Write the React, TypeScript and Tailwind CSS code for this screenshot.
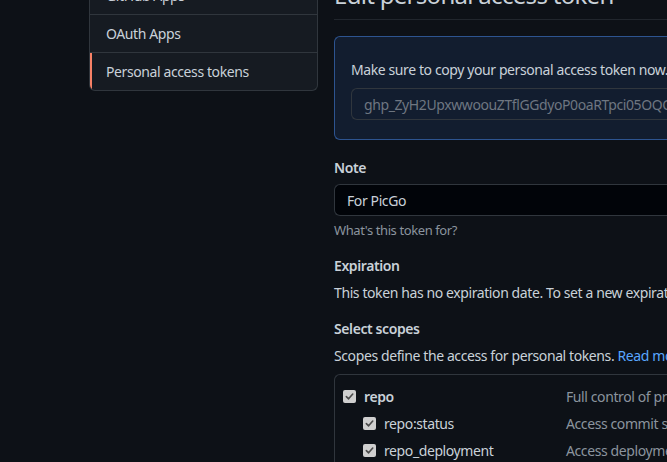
import React from "react";

function Check() {
  return (
    <span className="flex h-[13px] w-[13px] shrink-0 items-center justify-center rounded-[2px] bg-[#cfcfcf]">
      <svg width="9" height="9" viewBox="0 0 10 10" fill="none">
        <path d="M1.5 5.2 L4 7.6 L8.6 2.3" stroke="#4a4a4a" strokeWidth="1.8" strokeLinecap="round" strokeLinejoin="round" />
      </svg>
    </span>
  );
}

export default function App() {
  const font = { fontFamily: '"Noto Sans", "Liberation Sans", sans-serif', letterSpacing: "-0.4px" };
  return (
    <div className="h-[462px] w-[667px] overflow-hidden bg-[#0d1117] text-[14px] text-[#c9d1d9]" style={font}>
      <div className="flex gap-[16px] pl-[89px]">
        {/* Sidebar */}
        <div className="-mt-[23px] w-[229px] shrink-0">
          <div className="overflow-hidden rounded-b-[6px] border border-t-0 border-[#30363d] bg-[#161b22]">
            <div className="flex h-[38px] items-center border-b border-[#30363d] pl-[16px] leading-[21px]">GitHub Apps</div>
            <div className="flex h-[38px] items-center border-b border-[#30363d] pl-[16px] leading-[21px]">OAuth Apps</div>
            <div className="flex h-[37px] items-stretch">
              <span className="w-[2px] bg-[#f78166]" />
              <span className="flex items-center pl-[14px] leading-[21px]">Personal access tokens</span>
            </div>
          </div>
        </div>

        {/* Main */}
        <div className="-mt-[27px] min-w-0 flex-1">
          <div className="whitespace-nowrap border-b border-[#21262d] pb-[6px] pt-[4px] text-[24px] leading-[36px] tracking-[-0.7px]">
            Edit personal access token
          </div>

          <div className="mt-[16px] w-[420px] rounded-l-[6px] border border-r-0 border-[#2d5490] bg-[#121d2f] pb-[19px] pl-[16px] pt-[22px]">
            <div className="whitespace-nowrap leading-[21px]">Make sure to copy your personal access token now. You won't be able to see it again!</div>
            <div className="mt-[8px] flex h-[32px] items-center whitespace-nowrap rounded-l-[6px] border border-r-0 border-[#30363d] pl-[12px] text-[#6e7681]">
              ghp_ZyH2UpxwwoouZTflGGdyoP0oaRTpci05OQQmNhG3
            </div>
          </div>

          <div className="mt-[17px] font-semibold leading-[21px]">Note</div>
          <div className="mt-[6px] flex h-[32px] items-center rounded-l-[6px] border border-r-0 border-[#30363d] bg-[#010409] pl-[12px] text-[#c9d1d9]">
            For PicGo
          </div>
          <div className="mt-[5px] text-[13px] leading-[18px] text-[#8b949e]">What's this token for?</div>

          <div className="mt-[16px] font-semibold leading-[21px]">Expiration</div>
          <div className="mt-[6px] whitespace-nowrap leading-[21px]">
            This token has no expiration date. To set a new expiration date, you must regenerate the token.
          </div>

          <div className="mt-[15px] font-semibold leading-[21px]">Select scopes</div>
          <div className="mt-[6px] whitespace-nowrap leading-[21px]">
            Scopes define the access for personal tokens. <span className="text-[#58a6ff]">Read more about OAuth scopes.</span>
          </div>

          <div className="mt-[8px] rounded-tl-[6px] border-l border-t border-[#30363d] pt-[8px]">
            <div className="flex h-[27px] items-center">
              <div className="flex w-[231px] shrink-0 items-center gap-[8px] pl-[8px]">
                <Check />
                <span className="font-semibold">repo</span>
              </div>
              <span className="whitespace-nowrap text-[#8b949e]">Full control of private repositories</span>
            </div>
            <div className="flex h-[27px] items-center">
              <div className="flex w-[231px] shrink-0 items-center gap-[8px] pl-[28px]">
                <Check />
                <span>repo:status</span>
              </div>
              <span className="whitespace-nowrap text-[#8b949e]">Access commit status</span>
            </div>
            <div className="flex h-[27px] items-center">
              <div className="flex w-[231px] shrink-0 items-center gap-[8px] pl-[28px]">
                <Check />
                <span>repo_deployment</span>
              </div>
              <span className="whitespace-nowrap text-[#8b949e]">Access deployment status</span>
            </div>
          </div>
        </div>
      </div>
    </div>
  );
}
